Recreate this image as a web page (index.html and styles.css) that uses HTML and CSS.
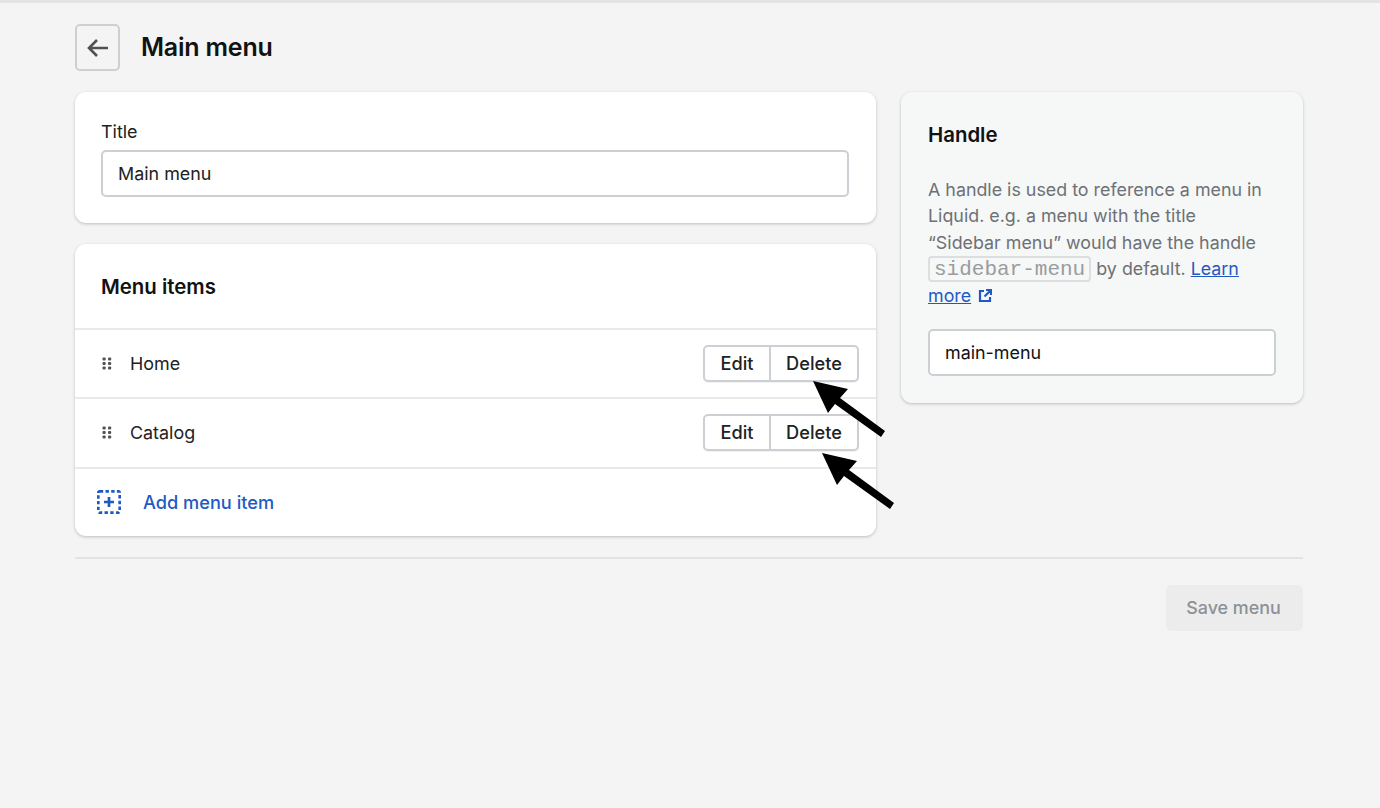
FILE: index.html
```html
<!DOCTYPE html>
<html lang="en">
<head>
<meta charset="utf-8">
<title>Main menu</title>
<link rel="stylesheet" href="styles.css">
</head>
<body>
<div class="topline"></div>
<div class="page">
  <header class="header">
    <button class="back" aria-label="Back">
      <svg width="24" height="24" viewBox="0 0 24 24" fill="none" stroke="#4f5255" stroke-width="2.6"><path d="M22 12H3M11 4l-8 8 8 8"/></svg>
    </button>
    <h1 class="title">Main menu</h1>
  </header>
  <div class="columns">
    <main class="main">
      <section class="card title-card">
        <label class="label">Title</label>
        <div class="input title-input">Main menu</div>
      </section>
      <section class="card items-card">
        <h2 class="card-heading items-heading">Menu items</h2>
        <div class="row">
          <svg class="grip" width="10" height="13" viewBox="0 0 10 13" fill="#4f5255"><rect x="0.500" y="0.500" width="3.200" height="3" rx="1"/><rect x="6" y="0.500" width="3.200" height="3" rx="1"/><rect x="0.500" y="5" width="3.200" height="3" rx="1"/><rect x="6" y="5" width="3.200" height="3" rx="1"/><rect x="0.500" y="9.500" width="3.200" height="3" rx="1"/><rect x="6" y="9.500" width="3.200" height="3" rx="1"/></svg>
          <span class="row-name">Home</span>
          <div class="btn-group"><span class="btn">Edit</span><span class="btn btn-del">Delete</span></div>
        </div>
        <div class="row">
          <svg class="grip" width="10" height="13" viewBox="0 0 10 13" fill="#4f5255"><rect x="0.500" y="0.500" width="3.200" height="3" rx="1"/><rect x="6" y="0.500" width="3.200" height="3" rx="1"/><rect x="0.500" y="5" width="3.200" height="3" rx="1"/><rect x="6" y="5" width="3.200" height="3" rx="1"/><rect x="0.500" y="9.500" width="3.200" height="3" rx="1"/><rect x="6" y="9.500" width="3.200" height="3" rx="1"/></svg>
          <span class="row-name">Catalog</span>
          <div class="btn-group"><span class="btn">Edit</span><span class="btn btn-del">Delete</span></div>
        </div>
        <div class="row add-row">
          <svg class="add-icon" width="24" height="24" viewBox="0 0 24 24" fill="none" stroke="#1f5ac4" stroke-width="2.700"><rect x="1.300" y="1.300" width="21.400" height="21.400" rx="1.500" stroke-dasharray="3.400 2.300"/><path d="M12 7v10M7 12h10"/></svg>
          <a class="add-link">Add menu item</a>
        </div>
      </section>
    </main>
    <aside class="card side">
      <h2 class="card-heading">Handle</h2>
      <p class="help">A handle is used to reference a menu in Liquid. e.g. a menu with the title “Sidebar menu” would have the handle <code class="code">sidebar-menu</code> by default. <a class="link">Learn more</a> <svg class="ext" width="14" height="14" viewBox="0 0 14 14" fill="none" stroke="#1f5ac4" stroke-width="2.200"><path d="M6 2H2v10h10V8M8 1h5v5M13 1L6.500 7.500"/></svg></p>
      <div class="input handle-input">main-menu</div>
    </aside>
  </div>
  <hr class="divider">
  <div class="actions"><span class="save">Save menu</span></div>
</div>
<svg class="arrows" width="1380" height="808" viewBox="0 0 1380 808">
  <path d="M813 381L848 389 840 398 885 431 881 437 835 404 828 413Z" fill="#000"/>
  <path d="M822 453L857 461 849 470 894 503 890 509 844 476 837 485Z" fill="#000"/>
</svg>
</body>
</html>
```
FILE: styles.css
```css
* { box-sizing: border-box; }
html, body { margin: 0; padding: 0; }
body {
  position: relative;
  width: 1380px;
  height: 808px;
  overflow: hidden;
  background: #f4f4f4;
  color: #202223;
  font-family: Inter, "Liberation Sans", sans-serif;
  font-size: 17.900px;
  line-height: 26px;
}
.topline { height: 3px; background: #e3e3e3; }
.page { padding: 21px 77px 0 75px; }
.header { display: flex; align-items: center; gap: 21px; height: 47px; margin-bottom: 21px; }
.back {
  width: 45px; height: 47px; padding: 0;
  display: flex; align-items: center; justify-content: center;
  background: transparent;
  border: 2px solid #ccd0d4;
  border-radius: 5px;
}
.title { margin: 0 0 2px; font-size: 25px; line-height: 32px; font-weight: 600; color: #111213; letter-spacing: -0.2px; }
.columns { display: flex; gap: 25px; align-items: flex-start; }
.main { width: 801px; display: flex; flex-direction: column; gap: 21px; }
.card {
  background: #fff;
  border-radius: 11px;
  box-shadow: 0 1px 3px rgba(63, 63, 68, .3);
}
.title-card { height: 131px; padding: 27px 27px 0 26px; }
.label { display: block; height: 31px; line-height: 25px; }
.input {
  height: 47px;
  padding: 0 15px;
  line-height: 43px;
  background: #fff;
  border: 2px solid #ccd0d4;
  border-radius: 5px;
  color: #202223;
}
.card-heading { margin: 0; font-size: 20.400px; line-height: 28px; font-weight: 600; color: #111213; }
.items-card { height: 292px; }
.items-heading { height: 84px; padding: 29px 26px 0; }
.row {
  display: flex; align-items: center;
  height: 69.300px;
  padding: 0 17px 0 27px;
  border-top: 2px solid #e8e9eb;
}
.grip { flex: none; }
.row-name { margin-left: 18px; flex: 1; }
.btn-group {
  display: flex; height: 37px;
  border: 2px solid #ccd0d4;
  border-radius: 5px;
  background: #fff;
  box-shadow: 0 1px 0 rgba(0, 0, 0, .05);
}
.btn { width: 64px; text-align: center; line-height: 33px; font-weight: 500; font-size: 18.200px; }
.btn-del { width: 88px; border-left: 2px solid #ccd0d4; }
.add-row { padding-left: 22px; }
.add-link { margin-left: 22px; color: #1f5ac4; font-weight: 500; font-size: 18.200px; }
.side {
  width: 402px; height: 311px;
  padding: 29px 27px 0;
  background: #f6f7f7;
}
.help { margin: 27.500px 0 19.500px; padding-right: 8px; color: #6d7175; line-height: 26.500px; font-size: 17.850px; }
.code {
  display: inline-block;
  height: 26px;
  vertical-align: top;
  font-family: "Liberation Mono", monospace;
  font-size: 21px;
  line-height: 23px;
  padding: 0 4px;
  border: 2px solid #dcdee0;
  border-radius: 4px;
  background: #f6f7f7;
  color: #999c9f;
}
.link { color: #1f5ac4; text-decoration: underline; }
.ext { vertical-align: -1px; margin-left: 2px; }
.handle-input { color: #111213; }
.divider { height: 0; margin: 21px 0 26px; border: 0; border-top: 2px solid #e2e3e5; }
.actions { display: flex; justify-content: flex-end; }
.save {
  width: 137px; height: 46px;
  padding-right: 2px;
  line-height: 46px; text-align: center;
  font-weight: 500;
  color: #8c9196;
  background: #ececec;
  border-radius: 5px;
}
.arrows { position: absolute; left: 0; top: 0; pointer-events: none; }
```
